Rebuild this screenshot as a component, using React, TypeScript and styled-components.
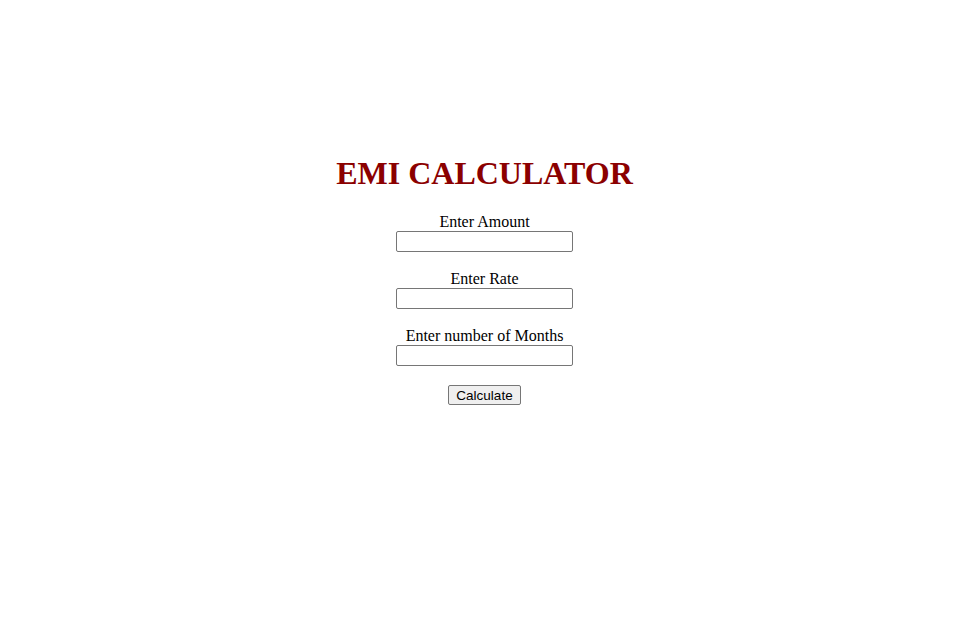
import * as React from 'react';
import styled, { createGlobalStyle } from 'styled-components';

const GlobalStyle = createGlobalStyle`
  html, body {
    margin: 0;
    padding: 0;
    background: #ffffff;
  }
  body {
    font-family: "Liberation Serif", "Times New Roman", serif;
    font-size: 16px;
    color: #000000;
  }
`;

const Page = styled.div`
  display: flex;
  flex-direction: column;
  align-items: center;
  width: 969px;
  min-height: 626px;
  padding-top: 155px;
  box-sizing: border-box;
`;

const Title = styled.h1`
  margin: 0 0 21px;
  font-family: "Liberation Serif", "Times New Roman", serif;
  font-size: 32px;
  line-height: 37px;
  font-weight: bold;
  color: #8b0000;
`;

const Field = styled.div`
  display: flex;
  flex-direction: column;
  align-items: center;
  margin-bottom: 18px;
`;

const Label = styled.label`
  font-size: 16px;
  line-height: 18px;
`;

const Input = styled.input`
  width: 177px;
  height: 21px;
  box-sizing: border-box;
  border: 1px solid #767676;
  border-radius: 2px;
  padding: 1px 2px;
  font-size: 13.33px;
  background: #ffffff;
  outline: none;
`;

const Button = styled.button`
  margin-top: 1px;
  height: 20px;
  width: 73px;
  box-sizing: border-box;
  padding: 1px 6px;
  font-family: Arial, "Liberation Sans", sans-serif;
  font-size: 13.5px;
  line-height: 15px;
  color: #000000;
  background: #efefef;
  border: 1px solid #767676;
  border-radius: 2px;
`;

type FieldProps = {
  id: string,
  label: string,
};

const FormField = ({ id, label }: FieldProps) => (
  <Field>
    <Label htmlFor={id}>{label}</Label>
    <Input id={id} type="text" />
  </Field>
);

const App = () => (
  <>
    <GlobalStyle />
    <Page>
      <Title>EMI CALCULATOR</Title>
      <FormField id="amount" label="Enter Amount" />
      <FormField id="rate" label="Enter Rate" />
      <FormField id="months" label="Enter number of Months" />
      <Button type="button">Calculate</Button>
    </Page>
  </>
);

export default App;
